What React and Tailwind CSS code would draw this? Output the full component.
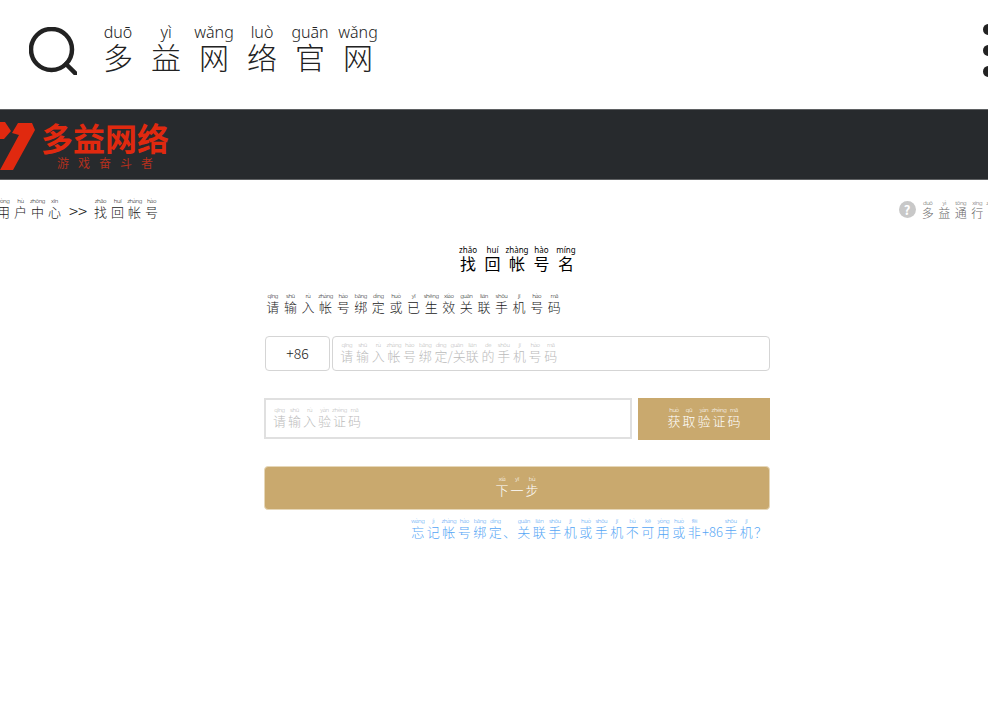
import { Fragment } from 'react';

const cjk = { fontFamily: '"Noto Sans CJK SC", "Noto Sans", sans-serif' };

// text is "字:pinyin" pairs split by spaces, plain chunks have no colon
function Py({ text, rtClass = 'text-[6px] tracking-[-0.4px]', cell = 'w-[15px]' }) {
  return (
    <>
      {text.split(' ').map((part, i) => {
        const [ch, py] = part.split(':');
        if (!py) return <Fragment key={i}>{ch}</Fragment>;
        return (
          <span key={i} className={'inline-flex justify-center ' + cell}>
            <ruby>
              {ch}
              <rt className={rtClass + ' leading-none font-[Noto_Sans]'}>{py}</rt>
            </ruby>
          </span>
        );
      })}
    </>
  );
}

function App() {
  return (
    <div className="w-[988px] h-[708px] overflow-hidden bg-white text-[#222]" style={cjk}>
      {/* top bar */}
      <header className="h-[109px] flex items-center justify-between pl-[29px] -mr-[6px]">
        <div className="flex items-center gap-[17px]">
          <svg width="48" height="48" viewBox="0 0 48 48" fill="none" stroke="#222" strokeWidth="4.5" className="-mt-[7px]">
            <circle cx="22.5" cy="22.5" r="20.5" />
            <path d="M37 37l10 10" strokeLinecap="round" />
          </svg>
          <h1 className="text-[30px] leading-[38px] font-light text-[#222] whitespace-nowrap -mt-[10px]">
            <Py text="多:duō 益:yì 网:wǎng 络:luò 官:guān 网:wǎng" rtClass="text-[16px]" cell="w-[48px]" />
          </h1>
        </div>
        <div className="flex flex-col gap-[10px] mb-[8px]">
          <span className="w-[11px] h-[11px] rounded-full bg-[#222]"></span>
          <span className="w-[11px] h-[11px] rounded-full bg-[#222]"></span>
          <span className="w-[11px] h-[11px] rounded-full bg-[#222]"></span>
        </div>
      </header>

      {/* brand band */}
      <div className="h-[71px] bg-[#272a2d] border-y border-[#5f6163] flex items-center overflow-hidden">
        <svg width="35" height="50" viewBox="0 0 35 50" className="shrink-0">
          <path d="M0 2h5l6 9-7 8H0z" fill="#e0290f" />
          <path d="M12 13l6-10h14l3 7-22 40H0l19-35z" fill="#e0290f" />
        </svg>
        <div className="ml-[6px] flex flex-col items-center">
          <div className="text-[32px] leading-[34px] font-bold text-[#e0290f] whitespace-nowrap">多益网络</div>
          <div className="text-[12px] leading-[14px] mt-[2px] tracking-[9px] text-[#b3301d] whitespace-nowrap pl-[9px]">游戏奋斗者</div>
        </div>
      </div>

      {/* breadcrumb */}
      <div className="h-[58px] flex items-center justify-between -ml-[5px] -mr-[14px]">
        <div className="text-[13px] font-light whitespace-nowrap flex items-end gap-[6px] mt-[2px]">
          <span><Py text="用:yòng 户:hù 中:zhōng 心:xīn" cell="w-[17px]" /></span>
          <span className="text-[17px] leading-[22px] w-[17px]">&gt;&gt;</span>
          <span><Py text="找:zhǎo 回:huí 帐:zhàng 号:hào" cell="w-[17px]" /></span>
        </div>
        <div className="flex items-center gap-[4px] whitespace-nowrap mt-[1px]">
          <span className="w-[17px] h-[17px] rounded-full bg-[#c8c8c8] text-white text-[13px] leading-[17px] font-bold text-center">?</span>
          <span className="text-[12px] font-light text-[#666] mt-[2px]"><Py text="多:duō 益:yì 通:tōng 行:xíng 证:zhèng" cell="w-[16.5px]" /></span>
        </div>
      </div>

      {/* form */}
      <main className="w-[506px] ml-[264px]">
        <h2 className="text-[16px] leading-[28px] font-normal text-center text-black mt-[8px]">
          <Py text="找:zhǎo 回:huí 帐:zhàng 号:hào 名:míng" rtClass="text-[8px]" cell="w-[24.5px]" />
        </h2>
        <p className="text-[13px] leading-[22px] font-light mt-[16px] whitespace-nowrap">
          <Py text="请:qǐng 输:shū 入:rù 帐:zhàng 号:hào 绑:bǎng 定:dìng 或:huò 已:yǐ 生:shēng 效:xiào 关:guān 联:lián 手:shǒu 机:jī 号:hào 码:mǎ" cell="w-[17.6px]" />
        </p>
        <div className="flex gap-[2px] mt-[18px] pl-[1px]">
          <div className="w-[65px] h-[35px] border border-[#d5d5d5] rounded-[4px] flex items-center justify-center text-[14px] font-light">+86</div>
          <div className="flex-1 h-[35px] border border-[#d5d5d5] rounded-[4px] flex items-center pl-[6px] text-[13px] font-light text-[#bbb] whitespace-nowrap">
            <span>
              <Py text="请:qǐng 输:shū 入:rù 帐:zhàng 号:hào 绑:bǎng 定:dìng /关:guān 联:lián 的:de 手:shǒu 机:jī 号:hào 码:mǎ" cell="w-[15.7px]" />
            </span>
          </div>
        </div>
        <div className="flex gap-[6px] mt-[27px]">
          <div className="w-[368px] h-[41px] border-2 border-[#e0e0e0] flex items-center pl-[6px] text-[13px] font-light text-[#bbb]">
            <span><Py text="请:qǐng 输:shū 入:rù 验:yàn 证:zhèng 码:mǎ" /></span>
          </div>
          <button className="flex-1 h-[42px] bg-[#c9a96e] text-white text-[13px] font-light">
            <Py text="获:huò 取:qǔ 验:yàn 证:zhèng 码:mǎ" />
          </button>
        </div>
        <button className="block w-full h-[44px] mt-[26px] bg-[#c9a96e] border border-[#e6d7b8] rounded-[4px] text-white text-[13px] font-light">
          <Py text="下:xià 一:yī 步:bù" />
        </button>
        <p className="text-[13px] leading-[20px] font-light text-[#55a6f5] text-right mt-[8px] pr-[3px] whitespace-nowrap">
          <Py text="忘:wàng 记:jì 帐:zhàng 号:hào 绑:bǎng 定:dìng 、 关:guān 联:lián 手:shǒu 机:jī 或:huò 手:shǒu 机:jī 不:bù 可:kě 用:yòng 或:huò 非:fēi +86 手:shǒu 机:jī ？" cell="w-[15.5px]" />
        </p>
      </main>
    </div>
  );
}

export default App;
